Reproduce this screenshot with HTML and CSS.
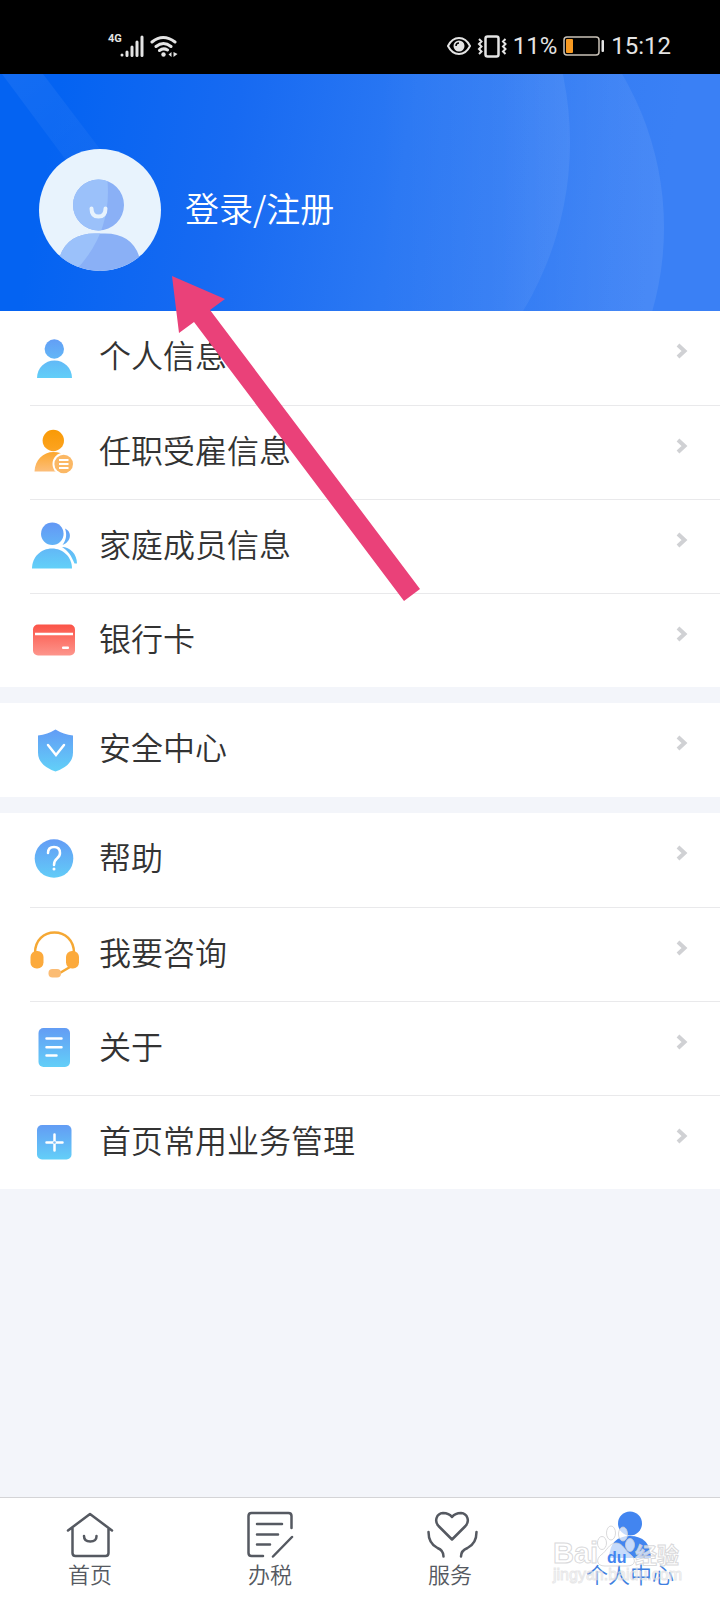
FILE: index.html
```html
<!DOCTYPE html>
<html lang="zh-CN">
<head>
  <meta charset="UTF-8">
  <meta name="viewport" content="width=device-width, initial-scale=1">
  <title>个人中心</title>
  <link rel="stylesheet" href="styles.css">
</head>
<body>

<!-- Shared gradients -->
<svg class="defs" width="0" height="0" aria-hidden="true">
  <defs>
    <linearGradient id="blue" x1="0" y1="0" x2="0" y2="1">
      <stop offset="0" stop-color="#639cf4"/><stop offset="1" stop-color="#63cff8"/>
    </linearGradient>
    <linearGradient id="blueFull" gradientUnits="userSpaceOnUse" x1="0" y1="4" x2="0" y2="48">
      <stop offset="0" stop-color="#6399f5"/><stop offset="1" stop-color="#62d0f8"/>
    </linearGradient>
    <linearGradient id="orange" gradientUnits="userSpaceOnUse" x1="0" y1="4" x2="0" y2="48">
      <stop offset="0" stop-color="#f99a06"/><stop offset="0.4" stop-color="#fca21c"/><stop offset="1" stop-color="#fcc184"/>
    </linearGradient>
    <linearGradient id="red" x1="0" y1="0" x2="0" y2="1">
      <stop offset="0" stop-color="#fb5347"/><stop offset="1" stop-color="#fd958c"/>
    </linearGradient>
  </defs>
</svg>

<div class="app">
  <div class="status-bar">
    <div class="status-left">
      <span class="network">4G</span>
      <svg width="24" height="24" viewBox="0 0 24 24" stroke="#e4e4e4" stroke-width="3" stroke-linecap="round">
        <path d="M2 21v0M7 18v3.500M12 13v8.500M17 8v13.500M22 3v18.500"/>
      </svg>
      <svg class="wifi" width="28" height="24" viewBox="0 0 28 24" fill="none" stroke="#e4e4e4" stroke-width="3" stroke-linecap="round">
        <path d="M2 8Q13 -1 25 8M6 12.500Q13.500 6.500 21 12.500M9.500 16.500Q13.500 13.500 17.500 16"/>
        <circle cx="13.500" cy="20.500" r="2.200" fill="#e4e4e4" stroke="none"/>
        <path d="M21.500 18v5l-3-2.500zM23.500 18v5l4-3z" fill="#e4e4e4" stroke="none"/>
      </svg>
    </div>
    <div class="status-right">
      <svg width="24" height="24" viewBox="0 0 24 24" fill="none" stroke="#e4e4e4" stroke-width="2">
        <path d="M1 12Q5 4 12 4t11 8q-4 8-11 8T1 12z"/>
        <circle cx="12" cy="12" r="5.500" fill="#e4e4e4" stroke="none"/>
        <path d="M9 12a3 3 0 0 1 3-3" stroke="#000" stroke-width="1.500"/>
      </svg>
      <svg width="30" height="24" viewBox="0 0 30 24" fill="none" stroke="#e4e4e4" stroke-width="2.500">
        <rect x="8.500" y="2.500" width="13" height="20" rx="2"/>
        <path d="M2 5l2.500 2.500L2 10l2.500 2.500L2 15l2.500 2.500L2 20M28.500 5L26 7.500l2.500 2.500-2.500 2.500 2.500 2.500-2.500 2.500 2.500 2.500" stroke-width="2"/>
      </svg>
      <span>11%</span>
      <svg width="42" height="24" viewBox="0 0 42 24" fill="none">
        <rect x="1" y="3" width="35" height="18" rx="3" stroke="#c9c2b8" stroke-width="1.500"/>
        <rect x="3" y="5" width="7" height="14" rx="1" fill="#f89a22"/>
        <rect x="38.500" y="6" width="2.500" height="12" rx="1" fill="#e4e4e4"/>
      </svg>
      <span>15:12</span>
    </div>
  </div>

  <header class="profile">
    <svg class="profile-bg" viewBox="0 0 720 236" preserveAspectRatio="none" aria-hidden="true">
      <defs>
        <linearGradient id="glow1" gradientUnits="userSpaceOnUse" x1="380" y1="0" x2="570" y2="0">
          <stop offset="0" stop-color="#fff" stop-opacity="0"/><stop offset="1" stop-color="#fff" stop-opacity="0.070"/>
        </linearGradient>
        <linearGradient id="glow2" gradientUnits="userSpaceOnUse" x1="500" y1="0" x2="664" y2="0">
          <stop offset="0" stop-color="#fff" stop-opacity="0"/><stop offset="1" stop-color="#fff" stop-opacity="0.080"/>
        </linearGradient>
        <linearGradient id="ray" gradientUnits="userSpaceOnUse" x1="20" y1="0" x2="95" y2="100">
          <stop offset="0" stop-color="#fff" stop-opacity="0.060"/><stop offset="1" stop-color="#fff" stop-opacity="0.030"/>
        </linearGradient>
      </defs>
      <path d="M2 0h41l90 118H90z" fill="url(#ray)"/>
      <circle cx="364" cy="153" r="300" fill="url(#glow2)"/>
      <circle cx="246" cy="68" r="324" fill="url(#glow1)"/>
    </svg>
    <a class="login" href="#login">
      <svg class="avatar" width="122" height="122" viewBox="0 0 122 122" aria-hidden="true">
        <defs>
          <clipPath id="face"><circle cx="61" cy="61" r="61"/></clipPath>
          <clipPath id="figure">
            <circle cx="59.500" cy="56" r="25.500"/>
            <path d="M18 122q3-37.500 38-37.500h10q34 0 37 37.500z"/>
          </clipPath>
        </defs>
        <circle cx="61" cy="61" r="61" fill="#e8f3fd"/>
        <g clip-path="url(#face)">
          <g clip-path="url(#figure)">
            <rect width="122" height="122" fill="#8ab0f6"/>
            <path d="M67 20q10 60-31 102H0V20z" fill="#9bc1fa"/>
          </g>
        </g>
        <path d="M52.500 59.500q0 8 7 8t7-8" fill="none" stroke="#e8f3fd" stroke-width="4" stroke-linecap="round"/>
      </svg>
      <span>登录/注册</span>
    </a>
  </header>

  <main>
    <ul class="menu">
      <li><a href="#info">
        <svg class="icon" viewBox="2 0 50 52">
          <g fill="url(#blueFull)"><circle cx="26.300" cy="18" r="9.700"/><path d="M9 47c0-10 8-17.500 17.500-17.500S44 37 44 47z"/></g>
        </svg>
        <span>个人信息</span>
        <svg class="arrow" viewBox="0 0 12 16"><path d="M2 2l6.500 6L2 14"/></svg>
      </a></li>
      <li><a href="#job">
        <svg class="icon" viewBox="2 0 50 52">
          <g fill="url(#orange)"><circle cx="25.300" cy="14.500" r="10.700"/><path d="M6.500 45.500C7 34 15 26 25.500 26c5 0 9 1.500 12 4v15.500z"/></g>
          <circle cx="35.700" cy="38" r="11.200" fill="#fff"/>
          <circle cx="35.700" cy="38" r="9.300" fill="#fbb865"/>
          <path d="M31 34h9.500M31 38h9.500M31 42h9.500" stroke="#fff" stroke-width="2"/>
        </svg>
        <span>任职受雇信息</span>
        <svg class="arrow" viewBox="0 0 12 16"><path d="M2 2l6.500 6L2 14"/></svg>
      </a></li>
      <li><a href="#family">
        <svg class="icon" viewBox="2 0 50 52">
          <g fill="url(#blueFull)">
            <circle cx="24.300" cy="13.800" r="11.300"/>
            <path d="M4 48.500C4 37 13 28.500 24 28.500S44 37 44 48.500z"/>
            <path d="M37 8.500c7 3 7 13-2.500 16.500 4-5 4.500-11 2.500-16.500z"/>
            <path d="M34 27c8 0 15 7 15 16.500h-2.500C43 35 40 31 34 27z"/>
          </g>
        </svg>
        <span>家庭成员信息</span>
        <svg class="arrow" viewBox="0 0 12 16"><path d="M2 2l6.500 6L2 14"/></svg>
      </a></li>
      <li><a href="#card">
        <svg class="icon" viewBox="2 0 50 52">
          <rect x="5" y="10.500" width="42" height="31" rx="5" fill="url(#red)"/>
          <path d="M7 20h38" stroke="#fff" stroke-width="2.500"/>
          <rect x="34" y="32.500" width="7" height="2.500" rx="1" fill="#fff"/>
        </svg>
        <span>银行卡</span>
        <svg class="arrow" viewBox="0 0 12 16"><path d="M2 2l6.500 6L2 14"/></svg>
      </a></li>
    </ul>

    <ul class="menu">
      <li><a href="#security">
        <svg class="icon" viewBox="2 0 50 52">
          <path d="M27.500 6.500q8 5 17.500 6v17q0 13-17.500 19Q10 42.500 10 29.500v-17q9.500-1 17.500-6z" fill="url(#blueFull)"/>
          <path d="M20 22l8 10 8-10" fill="none" stroke="#fff" stroke-width="2.500" stroke-linecap="round"/>
        </svg>
        <span>安全中心</span>
        <svg class="arrow" viewBox="0 0 12 16"><path d="M2 2l6.500 6L2 14"/></svg>
      </a></li>
    </ul>

    <ul class="menu">
      <li><a href="#help">
        <svg class="icon" viewBox="2 0 50 52">
          <circle cx="26" cy="25.500" r="19.300" fill="url(#blueFull)"/>
          <path d="M20 20q0-6 6-6t6 6q0 3-3 5.500t-3 6.500" fill="none" stroke="#fff" stroke-width="2.500" stroke-linecap="round"/>
          <circle cx="26" cy="36" r="1.500" fill="#fff"/>
        </svg>
        <span>帮助</span>
        <svg class="arrow" viewBox="0 0 12 16"><path d="M2 2l6.500 6L2 14"/></svg>
      </a></li>
      <li><a href="#consult">
        <svg class="icon" viewBox="2 0 50 52">
          <path d="M7 25C7 12 16 4.500 26.500 4.500S46 12 46 25M31 45.500L42 39" fill="none" stroke="#f5a834" stroke-width="2.500"/>
          <rect x="2.500" y="23" width="13" height="17.500" rx="6" fill="#fcaa3c"/>
          <rect x="38" y="23" width="13" height="17.500" rx="6" fill="#fcaa3c"/>
          <rect x="20.500" y="41" width="12.500" height="8.500" rx="4" fill="#fbbc74"/>
        </svg>
        <span>我要咨询</span>
        <svg class="arrow" viewBox="0 0 12 16"><path d="M2 2l6.500 6L2 14"/></svg>
      </a></li>
      <li><a href="#about">
        <svg class="icon" viewBox="2 0 50 52">
          <rect x="10.500" y="6" width="31.500" height="39" rx="5" fill="url(#blue)"/>
          <path d="M18.500 16.500h15M18.500 25.200h15M18.500 33.500h10" stroke="#fff" stroke-width="2.500" stroke-linecap="round"/>
        </svg>
        <span>关于</span>
        <svg class="arrow" viewBox="0 0 12 16"><path d="M2 2l6.500 6L2 14"/></svg>
      </a></li>
      <li><a href="#manage">
        <svg class="icon" viewBox="2 0 50 52">
          <rect x="9" y="9" width="34.500" height="34.500" rx="5" fill="url(#blue)"/>
          <path d="M18.500 26.500h16M26.500 18.500v16" stroke="#fff" stroke-width="2.500" stroke-linecap="round"/>
          <circle cx="26.500" cy="26.500" r="1.300" fill="#7fc0f6"/>
        </svg>
        <span>首页常用业务管理</span>
        <svg class="arrow" viewBox="0 0 12 16"><path d="M2 2l6.500 6L2 14"/></svg>
      </a></li>
    </ul>
  </main>

  <nav class="tab-bar">
    <a href="#home">
      <svg viewBox="0 0 52 52">
        <path d="M4 22.500L26 6l22 16.500M8.500 20v25q0 3 3 3h30q3 0 3-3V20M20 28q0 5.500 6.300 5.500T32.500 28"/>
      </svg>
      <span>首页</span>
    </a>
    <a href="#tax">
      <svg viewBox="0 0 52 52">
        <path d="M47.500 20V8q0-3-3-3H7.500q-3 0-3 3v37q0 3 3 3H19M48 29L29 48.500M13 16h25M13 26.500h21M13 36.500h13"/>
      </svg>
      <span>办税</span>
    </a>
    <a href="#service">
      <svg viewBox="0 0 52 52">
        <path d="M28 31.500L14.500 18C10 13 12.500 5.500 19 5q6 0 9 4 3-4 9-4c6.500.500 9 8 4.500 13zM4.500 24c0 9 5 14 9 16 4 1.500 6 4 6 8.500M52.500 24c0 9-5 14-9 16-4 1.500-6.500 4-6.500 8.500"/>
      </svg>
      <span>服务</span>
    </a>
    <a class="active" href="#me">
      <svg viewBox="0 0 52 52">
        <circle cx="26" cy="15.500" r="12"/><path d="M5 50q1-22 21-22t21 22z"/>
      </svg>
      <span>个人中心</span>
    </a>
    <svg class="watermark" width="150" height="70" viewBox="0 0 150 70">
      <g class="watermark-text">
        <text x="12" y="47" font-size="29">Bai</text>
        <path d="M75 27c-7 0-9 8-15 12-5 4-5 11 4 11h22c9 0 9-7 4-11-6-4-8-12-15-12z"/>
        <ellipse cx="61" cy="27" rx="4.500" ry="6.500"/>
        <ellipse cx="70" cy="17" rx="4.500" ry="7"/>
        <ellipse cx="82" cy="18" rx="4.500" ry="7"/>
        <ellipse cx="89" cy="29" rx="4.500" ry="6.500"/>
        <text x="94" y="47" font-size="22">经验</text>
        <text class="watermark-url" x="12" y="64" font-size="16">jingyan.baidu.com</text>
      </g>
      <text class="watermark-du" x="66" y="47" font-size="16">du</text>
    </svg>
  </nav>

  <!-- Pointer to the login entry -->
  <svg class="pointer" width="248" height="326" viewBox="0 0 248 326" aria-hidden="true">
    <path d="M0 0l53 23-15 11 210 279-16 12L22 46 7 57z" fill="#ea4179"/>
  </svg>
</div>

</body>
</html>
```

FILE: styles.css
```css
* {
  box-sizing: border-box;
}
body {
  margin: 0;
  font-family: "Noto Sans CJK SC", sans-serif;
  font-weight: 350;
  color: #333;
  background-color: #f3f5fa;
}
a {
  color: inherit;
  text-decoration: none;
}
.defs {
  position: absolute;
}
.app {
  position: relative;
  display: flex;
  flex-direction: column;
  min-height: 100vh;
}

/* Status bar */
.status-bar {
  display: flex;
  justify-content: space-between;
  height: 74px;
  padding: 18px 49px 0 108px;
  background-color: #000;
  color: #e4e4e4;
  font-family: Roboto, sans-serif;
  font-size: 24px;
  font-weight: 400;
}
.status-left,
.status-right {
  display: flex;
  align-items: center;
}
.status-right {
  gap: 6px;
}
.network {
  align-self: flex-start;
  width: 12px;
  padding-top: 13px;
  font-size: 11px;
  line-height: 16px;
  font-weight: bold;
}
.wifi {
  margin-left: 6px;
}

/* Profile header */
.profile {
  position: relative;
  display: flex;
  align-items: center;
  height: 237px;
  padding: 35px 39px 0;
  background: linear-gradient(100deg, #0463f2 8%, #176af2 32%, #2b78f3 55%, #3a80f5 90%);
}
.profile-bg {
  position: absolute;
  top: 0;
  left: 0;
  width: 100%;
  height: 100%;
}
.login {
  position: relative;
  display: flex;
  align-items: center;
  gap: 24px;
  color: #fff;
  font-size: 34px;
}
.login span {
  padding-bottom: 5px;
}

/* Menu lists */
main {
  flex: 1;
}
.menu {
  margin: 0 0 16px;
  padding: 0 0 0 30px;
  list-style: none;
  background-color: #fff;
}
.menu li + li {
  border-top: 1px solid #e9e9eb;
}
.menu li {
  height: 94px;
}
.menu a {
  display: flex;
  align-items: center;
  height: 100%;
  padding: 0 32px 2px 0;
  font-size: 32px;
  line-height: 48px;
}
.menu span {
  flex: 1;
  margin-left: 19px;
  padding-bottom: 6px;
}
.icon {
  width: 50px;
  height: 52px;
}
.arrow {
  width: 12px;
  height: 16px;
  margin-bottom: 12px;
  fill: none;
  stroke: #d0d1d4;
  stroke-width: 4;
}

/* Bottom tabs */
.tab-bar {
  position: relative;
  display: flex;
  padding: 10px 0 14px;
  border-top: 1px solid #d4d4d6;
  background-color: #fff;
  color: #555961;
}
.tab-bar a {
  flex: 1;
  display: flex;
  flex-direction: column;
  align-items: center;
  font-size: 22px;
  line-height: 26px;
}
.tab-bar a svg {
  width: 52px;
  height: 52px;
  overflow: visible;
  fill: none;
  stroke: #555961;
  stroke-width: 2.5;
  stroke-linecap: round;
  stroke-linejoin: round;
}
.tab-bar .active {
  color: #3f7fe0;
}
.tab-bar .active svg {
  fill: #4285f0;
  stroke: none;
}
.watermark {
  position: absolute;
  right: 29px;
  bottom: 14px;
  font-family: "Liberation Sans", "Noto Sans CJK SC", sans-serif;
  font-weight: bold;
}
.watermark-text {
  fill: #fff;
  fill-opacity: 0.7;
  stroke: #cfcfd2;
  stroke-width: 1;
  stroke-opacity: 0.8;
}
.watermark-url {
  fill-opacity: 0.5;
  stroke-opacity: 0.5;
  font-weight: normal;
}
.watermark-du {
  fill: #4285f0;
}

.pointer {
  position: absolute;
  top: 276px;
  left: 172px;
  pointer-events: none;
}
```
